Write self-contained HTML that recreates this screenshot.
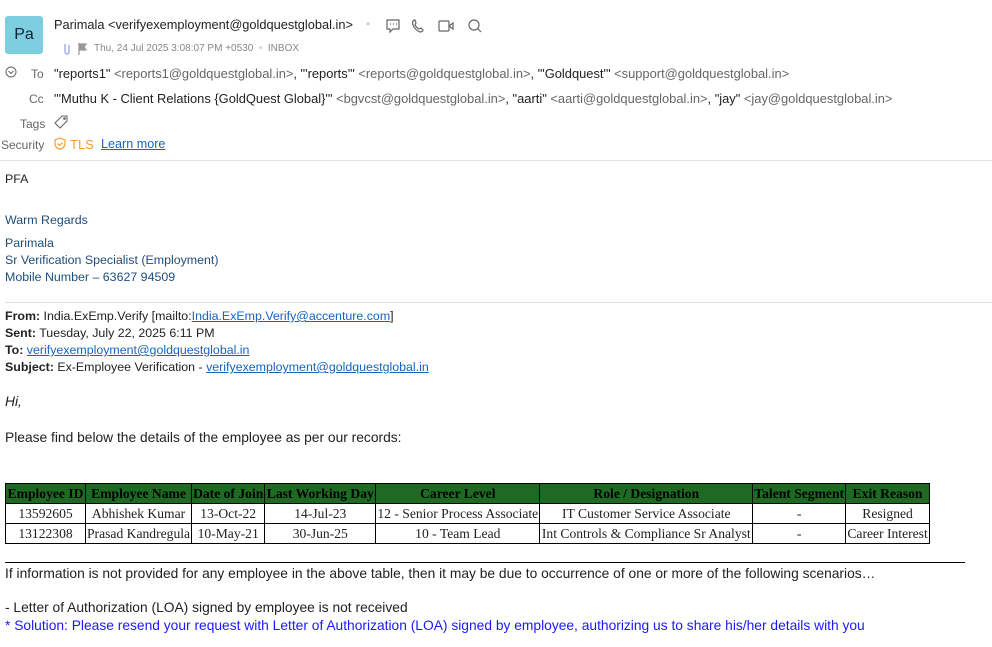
<!DOCTYPE html>
<html><head><meta charset="utf-8"><style>
body{margin:0;width:992px;height:647px;overflow:hidden;background:#fff;font-family:"Liberation Sans",sans-serif;color:#222;position:relative}
.a{position:absolute;white-space:nowrap}
.g{color:#666}
.l{color:#1565c0;text-decoration:underline}
.b{font-size:12.4px;color:#222}
.c{font-size:13.8px;color:#222}
table{position:absolute;left:5px;top:483px;border-collapse:collapse;font-family:"Liberation Serif",serif;font-size:13.6px}
td,th{border:1px solid #000;padding:0 1px;height:19px;text-align:center;white-space:nowrap}
th{background:#1e6a22;color:#000;font-weight:bold}
</style></head><body>
<div class="a" style="left:5px;top:16px;width:38px;height:38px;background:#7dcfe0;border-radius:3px;font-size:16px;line-height:38px;text-align:center;color:#123">Pa</div>
<div class="a" style="left:54px;top:17px;font-size:12.8px">Parimala &lt;verifyexemployment@goldquestglobal.in&gt;</div>
<div class="a g" style="left:366px;top:17px;font-size:12px;color:#ccc">•</div>
<svg class="a" style="left:385px;top:18px" width="100" height="16" fill="none" stroke="#666" stroke-width="1.2">
<path d="M2 2h12v9H8l-3 3v-3H2z"/><path d="M5 6h1M8 6h1M11 6h1"/>
<path d="M30 2c-2 0-3 2-2 5s4 6 7 7c2 0 3-1 3-2l-2-2-2 1c-2-1-3-2-4-4l1-2-1-3z"/>
<rect x="54" y="3" width="10" height="10" rx="1"/><path d="M64 8l4-3v6z"/>
<circle cx="89" cy="7" r="5"/><path d="M93 11l3 3"/></svg>
<svg class="a" style="left:61px;top:42px" width="30" height="14" fill="none" stroke="#8aa0d8" stroke-width="1.2"><path d="M4 2v8a2 2 0 0 0 4 0V3"/><path d="M18 1v12" stroke="#999"/><path d="M18 2h7l-2 3 2 3h-7z" fill="#999" stroke="#999"/></svg>
<div class="a" style="left:94px;top:43px;font-size:10px;color:#888">Thu, 24 Jul 2025 3:08:07 PM +0530 <span style="color:#ccc">&nbsp;•&nbsp;</span> INBOX</div>
<svg class="a" style="left:5px;top:66px" width="12" height="12" fill="none" stroke="#666"><circle cx="6" cy="6" r="5"/><path d="M3.5 5l2.5 2.5L8.5 5"/></svg>
<div class="a g" style="left:31px;top:67px;font-size:12px">To</div>
<div class="a" style="left:54px;top:66px;font-size:12.9px">"reports1" <span class="g">&lt;reports1@goldquestglobal.in&gt;</span>, "'reports'" <span class="g">&lt;reports@goldquestglobal.in&gt;</span>, "'Goldquest'" <span class="g">&lt;support@goldquestglobal.in&gt;</span></div>
<div class="a g" style="left:29px;top:92px;font-size:12px">Cc</div>
<div class="a" style="left:54px;top:91px;font-size:12.9px">"'Muthu K - Client Relations {GoldQuest Global}'" <span class="g">&lt;bgvcst@goldquestglobal.in&gt;</span>, "aarti" <span class="g">&lt;aarti@goldquestglobal.in&gt;</span>, "jay" <span class="g">&lt;jay@goldquestglobal.in&gt;</span></div>
<div class="a g" style="left:20px;top:117px;font-size:12px">Tags</div>
<svg class="a" style="left:54px;top:115px" width="14" height="14" fill="none" stroke="#666" stroke-width="1.1"><path d="M8 1h5v5l-7 7-5-5z"/><circle cx="10.5" cy="3.5" r=".8"/></svg>
<div class="a g" style="left:1px;top:138px;font-size:12px">Security</div>
<svg class="a" style="left:54px;top:137px" width="12" height="13" fill="none" stroke="#f0a030" stroke-width="1.2"><path d="M6 1l5 2v4c0 3-3 5-5 5S1 10 1 7V3z"/><path d="M3.5 6.5l2 2 3-3"/></svg>
<div class="a" style="left:70px;top:137px;font-size:13px;color:#f0a030">TLS</div>
<div class="a l" style="left:101px;top:137px;font-size:12.6px">Learn more</div>
<div class="a" style="left:0;top:160px;width:992px;border-top:1px solid #e4e4e4"></div>
<div class="a b" style="left:5px;top:172px">PFA</div>
<div class="a b" style="left:5px;top:213px;color:#1f4e79">Warm Regards</div>
<div class="a b" style="left:5px;top:236px;color:#1f4e79">Parimala</div>
<div class="a b" style="left:5px;top:253px;color:#1f4e79">Sr Verification Specialist (Employment)</div>
<div class="a b" style="left:5px;top:270px;color:#1f4e79">Mobile Number – 63627 94509</div>
<div class="a" style="left:5px;top:302px;width:987px;border-top:1px solid #e0e0e0"></div>
<div class="a b" style="left:5px;top:309px"><b>From:</b> India.ExEmp.Verify [mailto:<span class="l">India.ExEmp.Verify@accenture.com</span>]</div>
<div class="a b" style="left:5px;top:326px"><b>Sent:</b> Tuesday, July 22, 2025 6:11 PM</div>
<div class="a b" style="left:5px;top:343px"><b>To:</b> <span class="l">verifyexemployment@goldquestglobal.in</span></div>
<div class="a b" style="left:5px;top:360px"><b>Subject:</b> Ex-Employee Verification - <span class="l">verifyexemployment@goldquestglobal.in</span></div>
<div class="a c" style="left:5px;top:394px;font-style:italic">Hi,</div>
<div class="a c" style="left:5px;top:430px">Please find below the details of the employee as per our records:</div>
<table>
<tr><th style="width:77px">Employee ID</th><th style="width:102px">Employee Name</th><th style="width:70px">Date of Join</th><th style="width:108px">Last Working Day</th><th style="width:161px">Career Level</th><th style="width:210px">Role / Designation</th><th style="width:89px">Talent Segment</th><th style="width:81px">Exit Reason</th></tr>
<tr><td>13592605</td><td>Abhishek Kumar</td><td>13-Oct-22</td><td>14-Jul-23</td><td>12 - Senior Process Associate</td><td>IT Customer Service Associate</td><td>-</td><td>Resigned</td></tr>
<tr><td>13122308</td><td>Prasad Kandregula</td><td>10-May-21</td><td>30-Jun-25</td><td>10 - Team Lead</td><td>Int Controls &amp; Compliance Sr Analyst</td><td>-</td><td>Career Interest</td></tr>
</table>
<div class="a" style="left:5px;top:562px;width:960px;border-top:1px solid #000"></div>
<div class="a c" style="left:5px;top:566px">If information is not provided for any employee in the above table, then it may be due to occurrence of one or more of the following scenarios…</div>
<div class="a c" style="left:5px;top:600px">- Letter of Authorization (LOA) signed by employee is not received</div>
<div class="a c" style="left:5px;top:618px;color:#1a1aff">* Solution: Please resend your request with Letter of Authorization (LOA) signed by employee, authorizing us to share his/her details with you</div>
</body></html>
